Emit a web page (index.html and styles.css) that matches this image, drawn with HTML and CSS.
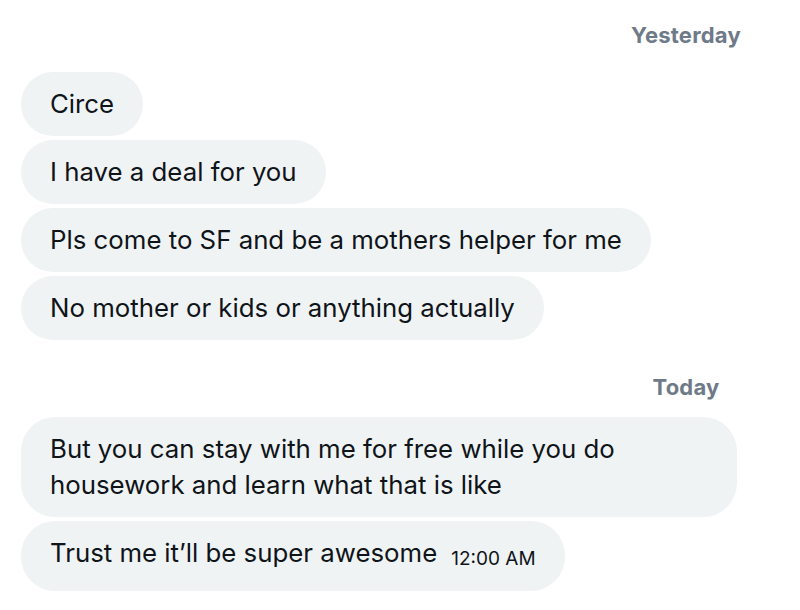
FILE: index.html
```html
<!DOCTYPE html>
<html>
<head>
<meta charset="utf-8">
<link rel="stylesheet" href="styles.css">
</head>
<body>
<div class="thread">
  <div class="day day-first"><span class="day-text">Yesterday</span></div>
  <div class="group">
    <div class="bubble">Circe</div>
    <div class="bubble">I have a deal for you</div>
    <div class="bubble">Pls come to SF and be a mothers helper for me</div>
    <div class="bubble">No mother or kids or anything actually</div>
  </div>
  <div class="day day-second"><span class="day-text">Today</span></div>
  <div class="group">
    <div class="bubble">But you can stay with me for free while you do housework and learn what that is like</div>
    <div class="bubble">Trust me it’ll be super awesome<span class="time">12:00 AM</span></div>
  </div>
</div>
</body>
</html>
```
FILE: styles.css
```css
html, body {
  margin: 0;
  padding: 0;
  background: #ffffff;
}
body {
  width: 800px;
  height: 610px;
  overflow: hidden;
  font-family: "Inter", "Liberation Sans", sans-serif;
  color: #0f1419;
}
.thread {
  padding: 21px 0 0 21px;
  display: flex;
  flex-direction: column;
}
.day {
  display: flex;
  justify-content: flex-end;
  padding-right: 44px;
}
.day-text {
  width: 140px;
  text-align: center;
  font-size: 22px;
  line-height: 28px;
  font-weight: 700;
  letter-spacing: 0.2px;
  color: #6e7a88;
}
.day-first { margin-bottom: 23px; }
.day-second { margin-top: 33px; margin-bottom: 16px; }
.group {
  display: flex;
  flex-direction: column;
  align-items: flex-start;
  gap: 4px;
}
.bubble {
  box-sizing: border-box;
  max-width: 716px;
  background: #eff3f4;
  border-radius: 34px;
  padding: 14px 29px 14px 29px;
  font-size: 25.8px;
  line-height: 36px;
}
.time {
  font-size: 19px;
  margin-left: 14px;
  vertical-align: -3px;
}
```
